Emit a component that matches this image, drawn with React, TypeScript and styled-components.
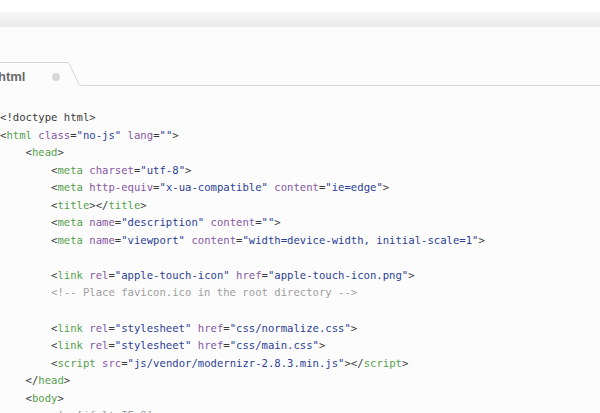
import React from "react";
import styled, { createGlobalStyle } from "styled-components";

const GlobalStyle = createGlobalStyle`
  html, body { margin: 0; padding: 0; }
  body { background: #fcfcfc; overflow: hidden; }
`;

const Window = styled.div`
  width: 600px;
  height: 413px;
  display: flex;
  flex-direction: column;
  background: #fcfcfc;
  overflow: hidden;
  & > * { flex: none; }
`;

const TopStrip = styled.div`
  height: 12px;
  background: #ffffff;
`;

const Toolbar = styled.div`
  height: 15px;
  background: linear-gradient(#f7f7f7, #ebebeb);
`;

const TabBar = styled.div`
  height: 59px;
  display: flex;
  align-items: flex-end;
`;

const Tab = styled.div`
  width: 66px;
  height: 24px;
  box-sizing: border-box;
  border-top: 1px solid #d6d6d6;
  display: flex;
  align-items: center;
  justify-content: space-between;
  padding: 4px 6px 0 0;
`;

const TabLabel = styled.span`
  margin-left: -2px;
  font-family: "Liberation Sans", Arial, sans-serif;
  font-weight: bold;
  font-size: 13px;
  color: #6a6a6a;
`;

const Dot = styled.span`
  width: 8px;
  height: 8px;
  border-radius: 50%;
  background: #d9d9d9;
`;

const Slant = styled.svg`
  display: block;
  flex: none;
`;

const Rule = styled.div`
  flex: 1;
  height: 1px;
  background: #d6d6d6;
`;

const Code = styled.pre`
  margin: 0;
  padding: 23px 0 0 0;
  font-family: "DejaVu Sans Mono", "Liberation Mono", monospace;
  font-size: 10.6px;
  line-height: 17.56px;
  color: #333333;
`;

const Line = styled.div`
  height: 17.56px;
  white-space: pre;
`;

type Kind = "p" | "t" | "a" | "s" | "c";

const colors: Record<Kind, string> = {
  p: "#3a3a3a",
  t: "#55a04c",
  a: "#8557a3",
  s: "#2b3f95",
  c: "#9e9e9e",
};

const Tok = styled.span<{ $k: Kind }>`
  color: ${(p) => colors[p.$k]};
`;

const source = [
  "<!doctype html>",
  '<html class="no-js" lang="">',
  "    <head>",
  '        <meta charset="utf-8">',
  '        <meta http-equiv="x-ua-compatible" content="ie=edge">',
  "        <title></title>",
  '        <meta name="description" content="">',
  '        <meta name="viewport" content="width=device-width, initial-scale=1">',
  "",
  '        <link rel="apple-touch-icon" href="apple-touch-icon.png">',
  "        <!-- Place favicon.ico in the root directory -->",
  "",
  '        <link rel="stylesheet" href="css/normalize.css">',
  '        <link rel="stylesheet" href="css/main.css">',
  '        <script src="js/vendor/modernizr-2.8.3.min.js"></script>',
  "    </head>",
  "    <body>",
  "        <!--[if lt IE 8]>",
];

function tokenize(line: string): [Kind, string][] {
  const out: [Kind, string][] = [];
  const lead = line.match(/^\s*/)![0];
  if (lead) out.push(["p", lead]);
  const rest = line.slice(lead.length);
  if (rest.startsWith("<!--")) {
    out.push(["c", rest]);
    return out;
  }
  if (rest.startsWith("<!")) {
    out.push(["p", rest]);
    return out;
  }
  const re = /(<\/?)([a-zA-Z]+)|(\s+[a-zA-Z-]+)(?==)|(=)|("[^"]*")|(>)|(\s+)/g;
  let m: RegExpExecArray | null;
  while ((m = re.exec(rest))) {
    if (m[1]) {
      out.push(["p", m[1]]);
      out.push(["t", m[2]]);
    } else if (m[3]) out.push(["a", m[3]]);
    else if (m[4]) out.push(["p", m[4]]);
    else if (m[5]) out.push(["s", m[5]]);
    else if (m[6]) out.push(["p", m[6]]);
    else if (m[7]) out.push(["p", m[7]]);
  }
  return out;
}

export default function App() {
  return (
    <>
      <GlobalStyle />
      <Window>
        <TopStrip />
        <Toolbar />
        <TabBar>
          <Tab>
            <TabLabel>html</TabLabel>
            <Dot />
          </Tab>
          <Slant width="15" height="24" viewBox="0 0 15 24">
            <path
              d="M0 0.5 H1 Q2.6 0.5 3.4 2 L13 22.4 Q13.6 23.5 15 23.5"
              fill="none"
              stroke="#d6d6d6"
              strokeWidth="1"
            />
          </Slant>
          <Rule />
        </TabBar>
        <Code>
          {source.map((l, i) => (
            <Line key={i}>
              {tokenize(l).map(([k, t], j) => (
                <Tok key={j} $k={k}>
                  {t}
                </Tok>
              ))}
            </Line>
          ))}
        </Code>
      </Window>
    </>
  );
}
